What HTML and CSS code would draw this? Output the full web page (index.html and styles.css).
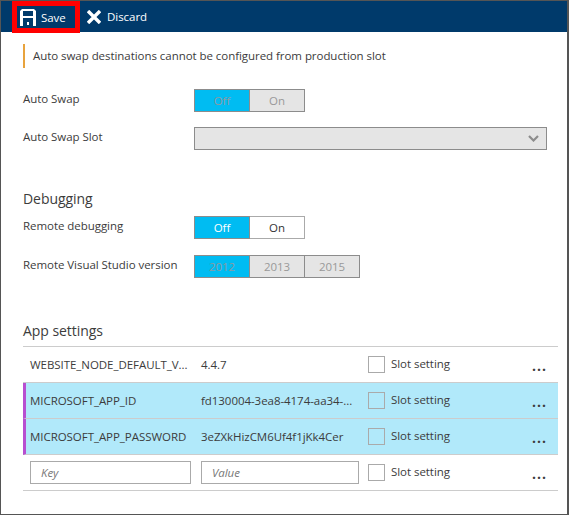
FILE: index.html
```html
<!DOCTYPE html>
<html lang="en">
<head>
  <meta charset="UTF-8">
  <title>Application settings</title>
  <link rel="stylesheet" href="styles.css">
</head>
<body>
  <div class="blade">
    <div class="toolbar">
      <div class="tool tool-save">
        <svg class="icon" width="16" height="17" viewBox="0 0 16 17">
          <path fill="#fff" fill-rule="evenodd" d="M0 2 2 0H14L16 2V17H13V9H3V17H0ZM3 2V7H13V2ZM7 13H9V16H7Z"/>
        </svg>
        <span>Save</span>
      </div>
      <div class="tool tool-discard">
        <svg class="icon" width="14" height="14" viewBox="0 0 14 14">
          <path fill="none" stroke="#fff" stroke-width="3.400" d="M1 1 13 13M13 1 1 13"/>
        </svg>
        <span>Discard</span>
      </div>
    </div>

    <div class="content">
      <p class="notice">Auto swap destinations cannot be configured from production slot</p>

      <div class="field field-swap">
        <label class="field-label">Auto Swap</label>
        <div class="toggle disabled">
          <span class="opt selected">Off</span>
          <span class="opt">On</span>
        </div>
      </div>
      <div class="field field-slot">
        <label class="field-label">Auto Swap Slot</label>
        <div class="select">
          <svg width="11" height="7" viewBox="0 0 11 7">
            <path fill="none" stroke="#8c8c8c" stroke-width="2.200" d="M1 1 5.500 5.500 10 1"/>
          </svg>
        </div>
      </div>

      <h2 class="heading heading-debug">Debugging</h2>
      <div class="field field-debug">
        <label class="field-label">Remote debugging</label>
        <div class="toggle">
          <span class="opt selected">Off</span>
          <span class="opt">On</span>
        </div>
      </div>
      <div class="field field-version">
        <label class="field-label">Remote Visual Studio version</label>
        <div class="toggle disabled">
          <span class="opt selected">2012</span>
          <span class="opt">2013</span>
          <span class="opt">2015</span>
        </div>
      </div>

      <h2 class="heading heading-app">App settings</h2>
      <div class="settings">
        <div class="row">
          <div class="key">WEBSITE_NODE_DEFAULT_V...</div>
          <div class="value">4.4.7</div>
          <div class="check"></div>
          <div class="slot">Slot setting</div>
          <div class="more">...</div>
        </div>
        <div class="row changed">
          <div class="key">MICROSOFT_APP_ID</div>
          <div class="value">fd130004-3ea8-4174-aa34-...</div>
          <div class="check"></div>
          <div class="slot">Slot setting</div>
          <div class="more">...</div>
        </div>
        <div class="row changed">
          <div class="key">MICROSOFT_APP_PASSWORD</div>
          <div class="value">3eZXkHizCM6Uf4f1jKk4Cer</div>
          <div class="check"></div>
          <div class="slot">Slot setting</div>
          <div class="more">...</div>
        </div>
        <div class="row">
          <div class="key"><div class="input input-key">Key</div></div>
          <div class="value"><div class="input input-value">Value</div></div>
          <div class="check"></div>
          <div class="slot">Slot setting</div>
          <div class="more">...</div>
        </div>
      </div>
    </div>
  </div>
</body>
</html>
```

FILE: styles.css
```css
html, body {
  margin: 0;
  padding: 0;
  background: #fff;
}
body {
  font-family: "Open Sans", "Noto Sans", sans-serif;
  font-size: 11.5px;
  letter-spacing: -0.05px;
  color: #3c3c3c;
}
.blade {
  width: 569px;
  height: 515px;
  box-sizing: border-box;
  border: 1px solid #555;
  border-right-width: 2px;
}
.toolbar {
  height: 31px;
  background: #003a6b;
  display: flex;
  align-items: center;
  color: #fff;
}
.tool {
  display: flex;
  align-items: center;
  gap: 5px;
}
.tool-save {
  box-sizing: border-box;
  width: 68px;
  height: 32px;
  margin: 0 0 -1px 11px;
  padding-left: 3px;
  border: 5px solid #f00;
}
.tool-discard {
  margin-left: 7px;
  gap: 6px;
}
.content {
  padding: 12px 20px 0 22px;
}
.notice {
  margin: 0;
  height: 24px;
  line-height: 23px;
  border-left: 2px solid #e8a33d;
  padding-left: 8px;
}
.field {
  display: flex;
  align-items: center;
}
.field-label {
  width: 171px;
  flex: none;
  margin-top: -4px;
}
.field-swap { margin-top: 21px; }
.field-slot { margin-top: 15px; }
.field-debug { margin-top: 7px; }
.field-version { margin-top: 16px; }
.toggle {
  display: flex;
  border: 1px solid #aaa;
  background: #fff;
  color: #333;
}
.opt {
  width: 54px;
  height: 21px;
  line-height: 21px;
  text-align: center;
}
.opt + .opt {
  border-left: 1px solid #8c8c8c;
}
.toggle .selected {
  background: #00bcf2;
  color: #fff;
  box-shadow: 0 0 0 1px #8c8c8c;
}
.toggle.disabled {
  border-color: #8c8c8c;
  background: #e5e5e5;
  color: #999;
}
.toggle.disabled .selected { color: #8a9aa5; }
.select {
  flex: 1;
  height: 21px;
  border: 1px solid #8c8c8c;
  background: #e5e5e5;
  display: flex;
  align-items: center;
  justify-content: flex-end;
  padding-right: 7px;
}
.heading {
  margin: 0;
  font-size: 14px;
  font-weight: 400;
  color: #3c3c3c;
  line-height: 20px;
}
.heading-debug { margin-top: 39px; }
.heading-app { margin-top: 43px; }
.settings {
  margin: 5px -11px 0 0;
  border-top: 1px solid #ccc;
}
.row {
  display: flex;
  align-items: center;
  height: 35px;
  border-bottom: 1px solid #ccc;
  padding-left: 7px;
}
.row.changed {
  background: #b1e9fa;
  border-left: 3px solid #b84fd0;
  padding-left: 4px;
}
.key {
  width: 171px;
  flex: none;
  white-space: nowrap;
}
.value {
  width: 167px;
  flex: none;
  white-space: nowrap;
}
.input {
  box-sizing: border-box;
  height: 23px;
  line-height: 21px;
  border: 1px solid #aaa;
  background: #fff;
  padding-left: 10px;
  font-style: italic;
  color: #777;
}
.input-key { width: 161px; }
.input-value { width: 158px; }
.check {
  box-sizing: border-box;
  width: 17px;
  height: 17px;
  border: 1px solid #aaa;
  background: #fff;
  margin-right: 6px;
}
.changed .check {
  background: transparent;
}
.slot {
  width: 141px;
  flex: none;
  margin-top: -3px;
}
.more {
  font-weight: 700;
  font-size: 14px;
  letter-spacing: 1px;
  color: #3c3c3c;
  margin-top: 2px;
}
```
